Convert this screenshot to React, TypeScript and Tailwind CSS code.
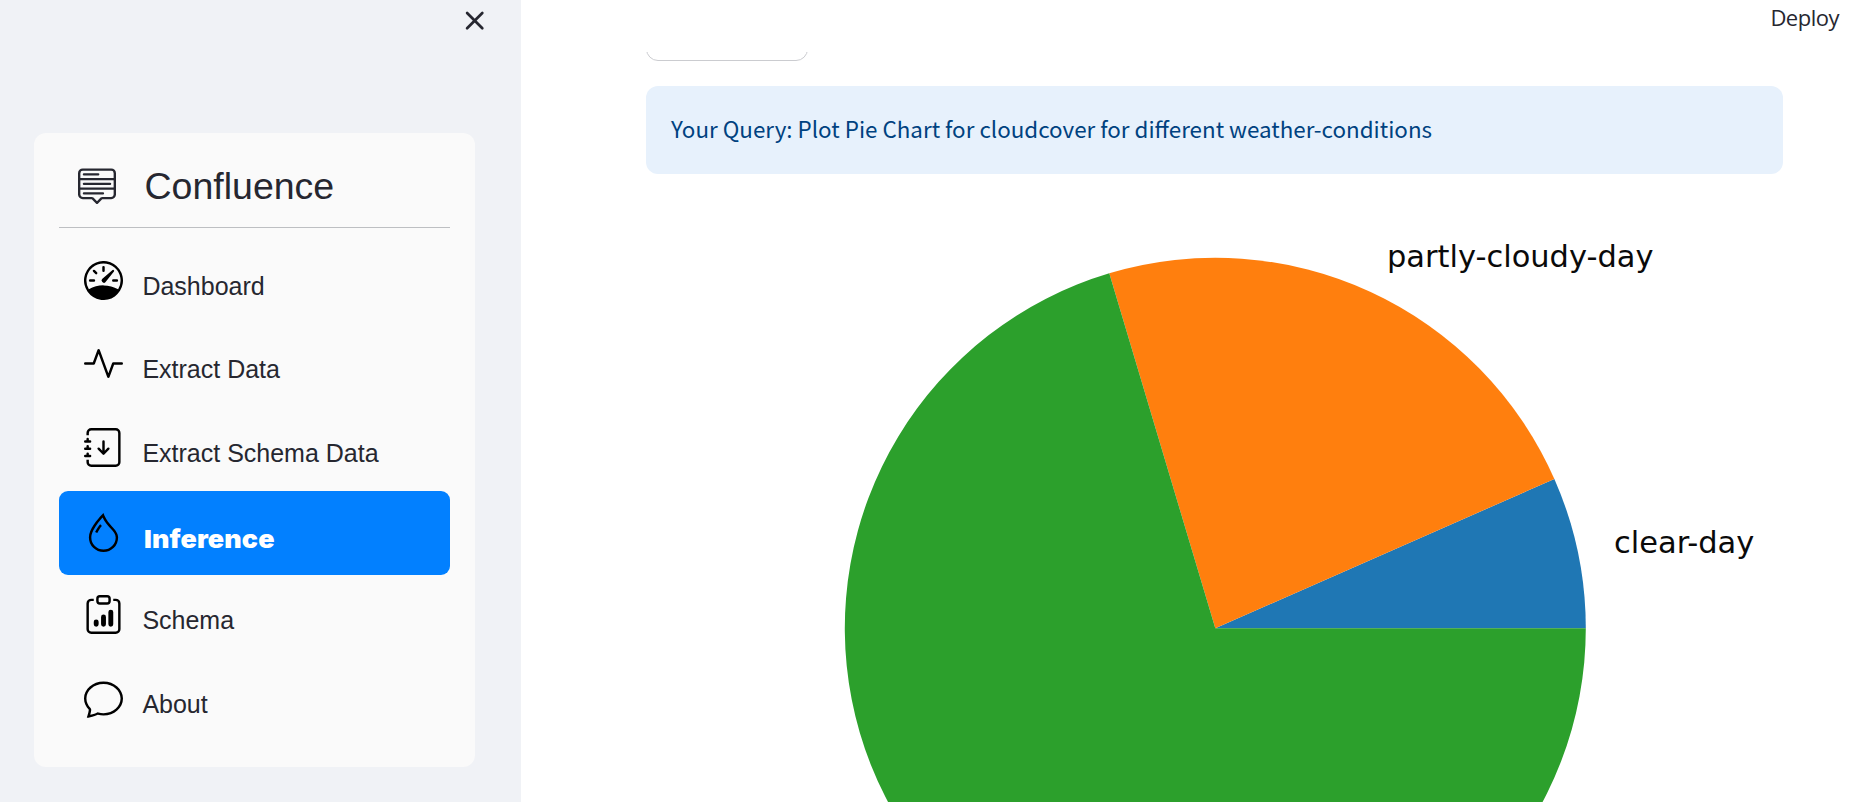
import type { IconType } from "react-icons";
import {
  BsActivity,
  BsChat,
  BsClipboardData,
  BsDroplet,
  BsJournalArrowDown,
  BsMenuUp,
  BsSpeedometer,
} from "react-icons/bs";

type Item = { label: string; icon: IconType; active?: boolean };

const items: Item[] = [
  { label: "Dashboard", icon: BsSpeedometer },
  { label: "Extract Data", icon: BsActivity },
  { label: "Extract Schema Data", icon: BsJournalArrowDown },
  { label: "Inference", icon: BsDroplet, active: true },
  { label: "Schema", icon: BsClipboardData },
  { label: "About", icon: BsChat },
];

function Sidebar() {
  return (
    <aside className="flex h-full w-[521px] shrink-0 flex-col bg-[#f0f2f6] pl-[34px] pr-[46px] font-['Liberation_Sans',sans-serif] text-[#262730]">
      <div className="flex h-[133px] shrink-0 justify-end pt-[11px]">
        <svg viewBox="0 0 20 20" className="-mr-[9.5px] h-5 w-5" fill="none" stroke="currentColor" strokeWidth="2.7" strokeLinecap="round">
          <path d="M2.1 2 17.3 17.2M17.3 2 2.1 17.2" />
        </svg>
      </div>
      <nav className="flex h-[634px] shrink-0 flex-col rounded-xl bg-[#fafafa] px-[25px]">
        <div className="flex h-[95px] shrink-0 items-center border-b border-[#bdbfc2] pl-[19px] pt-[9px]">
          <BsMenuUp className="h-[38px] w-[38px]" />
          <span className="ml-[28.5px] pt-[4px] text-[37.5px] leading-none">Confluence</span>
        </div>
        <ul className="pt-[11.7px]">
          {items.map(({ label, icon: Icon, active }) => (
            <li
              key={label}
              className={
                active
                  ? "mt-[0.8px] mb-[-0.8px] flex h-[84px] items-center rounded-[9px] bg-[#0280ff] pl-[25px] text-white"
                  : "flex h-[83.5px] items-center pl-[25px]"
              }
            >
              <Icon className={active ? "h-[39px] w-[39px] shrink-0 text-black" : "mb-[2px] h-[39px] w-[39px] shrink-0 text-black"} />
              <span
                className={
                  active
                    ? "ml-[20.5px] mt-[13px] origin-left scale-x-[1.075] font-['Inter',sans-serif] text-[25px] font-black leading-none tracking-[0.1px]"
                    : "ml-[19.4px] mt-[10px] text-[25px] leading-none"
                }
              >
                {label}
              </span>
            </li>
          ))}
        </ul>
      </nav>
    </aside>
  );
}

const CX = 1215.3 - 646;
const CY = 628.3 - 174;
const R = 370.5;

function wedge(from: number, to: number) {
  const point = (deg: number) => {
    const a = (deg * Math.PI) / 180;
    return `${CX + R * Math.cos(a)} ${CY - R * Math.sin(a)}`;
  };
  const large = to - from > 180 ? 1 : 0;
  return `M${CX} ${CY}L${point(from)}A${R} ${R} 0 ${large} 0 ${point(to)}Z`;
}

function PieChart() {
  return (
    <svg width="1137" height="628" viewBox="0 0 1137 628" className="block shrink-0">
      <path d={wedge(0, 23.77)} fill="#1f77b4" />
      <path d={wedge(23.77, 106.63)} fill="#ff7f0e" />
      <path d={wedge(106.63, 360)} fill="#2ca02c" />
      <g className="font-['DejaVu_Sans',sans-serif] text-[31px]" fill="#0a0a0a">
        <text x="741" y="93" textLength="266.5" lengthAdjust="spacingAndGlyphs">partly-cloudy-day</text>
        <text x="968" y="378.5" textLength="140.3" lengthAdjust="spacingAndGlyphs">clear-day</text>
      </g>
    </svg>
  );
}

export default function App() {
  return (
    <div className="flex h-[802px] w-[1868px] overflow-hidden bg-white">
      <Sidebar />
      <main className="flex min-w-0 flex-1 flex-col">
        <header className="flex h-[52px] shrink-0 justify-end pr-[29px] pt-[2px]">
          <span className="font-['Open_Sans',sans-serif] text-[22px] leading-[30px] tracking-[-0.5px] text-[#262730]">Deploy</span>
        </header>
        <div className="flex flex-1 flex-col overflow-hidden pl-[125px]">
          <div className="h-[9px] w-[162px] shrink-0 overflow-hidden">
            <div className="-mt-[52px] h-[61px] rounded-xl border border-[#cbccd0]" />
          </div>
          <div className="mt-[25px] flex h-[88px] w-[1137px] shrink-0 items-center rounded-xl bg-[#e7f1fc] pl-[25px]">
            <span className="whitespace-nowrap pb-[4px] font-['Noto_Sans_CJK_SC',sans-serif] text-[22.4px] leading-none text-[#004280]">
              Your Query: Plot Pie Chart for cloudcover for different weather-conditions
            </span>
          </div>
          <PieChart />
        </div>
      </main>
    </div>
  );
}
